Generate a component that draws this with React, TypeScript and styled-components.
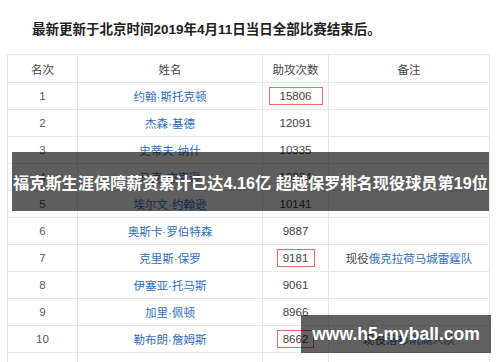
import React from "react";
import styled, { createGlobalStyle } from "styled-components";

const Global = createGlobalStyle`
  html, body { margin: 0; padding: 0; background: #fff; }
  body {
    width: 500px; height: 362px; overflow: hidden;
    font-family: "Liberation Sans", "Noto Sans CJK SC", sans-serif;
  }
`;

const Page = styled.div`
  position: relative;
  width: 500px;
  height: 362px;
  overflow: hidden;
`;

const Title = styled.h1`
  margin: 0;
  padding: 21px 0 0 32px;
  height: 54px;
  box-sizing: border-box;
  font-size: 13.5px;
  line-height: 18px;
  font-weight: bold;
  color: #222;
`;

const Table = styled.table`
  margin-left: 7px;
  width: 482px;
  border-collapse: collapse;
  table-layout: fixed;
  font-size: 11.5px;
`;

const Th = styled.th`
  height: 27px;
  padding: 0;
  border: 1px solid #e6e6e6;
  font-weight: normal;
  color: #444;
  text-align: center;
  vertical-align: middle;
`;

const Td = styled.td<{ $tone?: "rank" | "name" | "num" }>`
  height: 26px;
  padding: 0;
  border: 1px solid #e6e6e6;
  text-align: center;
  vertical-align: middle;
  color: ${(p) => (p.$tone === "name" ? "#2f6fbf" : p.$tone === "rank" ? "#5c5c66" : "#444")};
`;

const Highlight = styled.span<{ $w: number }>`
  display: inline-block;
  width: ${(p) => p.$w}px;
  height: 16px;
  line-height: 16px;
  border: 1px solid #ef6b6b;
`;

const Link = styled.span`
  color: #2f6fbf;
`;

const Banner = styled.div`
  position: absolute;
  left: 12px;
  top: 152px;
  width: 477px;
  height: 59px;
  background: rgba(0, 0, 0, 0.63);
  color: #fff;
  display: flex;
  align-items: center;
  justify-content: center;
  font-size: 16.2px;
  font-weight: bold;
  white-space: nowrap;
`;

const Watermark = styled.div`
  position: absolute;
  left: 301px;
  top: 315px;
  width: 190px;
  height: 38px;
  background: rgba(0, 0, 0, 0.62);
  color: #fff;
  display: flex;
  align-items: center;
  justify-content: center;
  font-size: 17.5px;
  font-weight: bold;
  white-space: nowrap;
`;

type Row = { rank: string; name: string; num: string; hw?: number; note?: [string, string] };

const rows: Row[] = [
  { rank: "1", name: "约翰·斯托克顿", num: "15806", hw: 52 },
  { rank: "2", name: "杰森·基德", num: "12091" },
  { rank: "3", name: "史蒂夫·纳什", num: "10335" },
  { rank: "4", name: "马克·杰克逊", num: "10334" },
  { rank: "5", name: "埃尔文·约翰逊", num: "10141" },
  { rank: "6", name: "奥斯卡·罗伯特森", num: "9887" },
  { rank: "7", name: "克里斯·保罗", num: "9181", hw: 36, note: ["现役", "俄克拉荷马城雷霆队"] },
  { rank: "8", name: "伊塞亚·托马斯", num: "9061" },
  { rank: "9", name: "加里·佩顿", num: "8966" },
  { rank: "10", name: "勒布朗·詹姆斯", num: "8662", hw: 35, note: ["现役", "洛杉矶湖人队"] },
];

export default function App() {
  return (
    <Page>
      <Global />
      <Title>最新更新于北京时间2019年4月11日当日全部比赛结束后。</Title>
      <Table>
        <colgroup>
          <col style={{ width: 70 }} />
          <col style={{ width: 185 }} />
          <col style={{ width: 66 }} />
          <col style={{ width: 161 }} />
        </colgroup>
        <thead>
          <tr>
            <Th>名次</Th>
            <Th>姓名</Th>
            <Th>助攻次数</Th>
            <Th>备注</Th>
          </tr>
        </thead>
        <tbody>
          {rows.map((r) => (
            <tr key={r.rank}>
              <Td $tone="rank">{r.rank}</Td>
              <Td $tone="name">{r.name}</Td>
              <Td $tone="num">{r.hw ? <Highlight $w={r.hw}>{r.num}</Highlight> : r.num}</Td>
              <Td $tone="num">
                {r.note ? (
                  <>
                    {r.note[0]}
                    <Link>{r.note[1]}</Link>
                  </>
                ) : null}
              </Td>
            </tr>
          ))}
          <tr>
            <Td />
            <Td />
            <Td />
            <Td />
          </tr>
        </tbody>
      </Table>
      <Banner>福克斯生涯保障薪资累计已达4.16亿 超越保罗排名现役球员第19位</Banner>
      <Watermark>www.h5-myball.com</Watermark>
    </Page>
  );
}
